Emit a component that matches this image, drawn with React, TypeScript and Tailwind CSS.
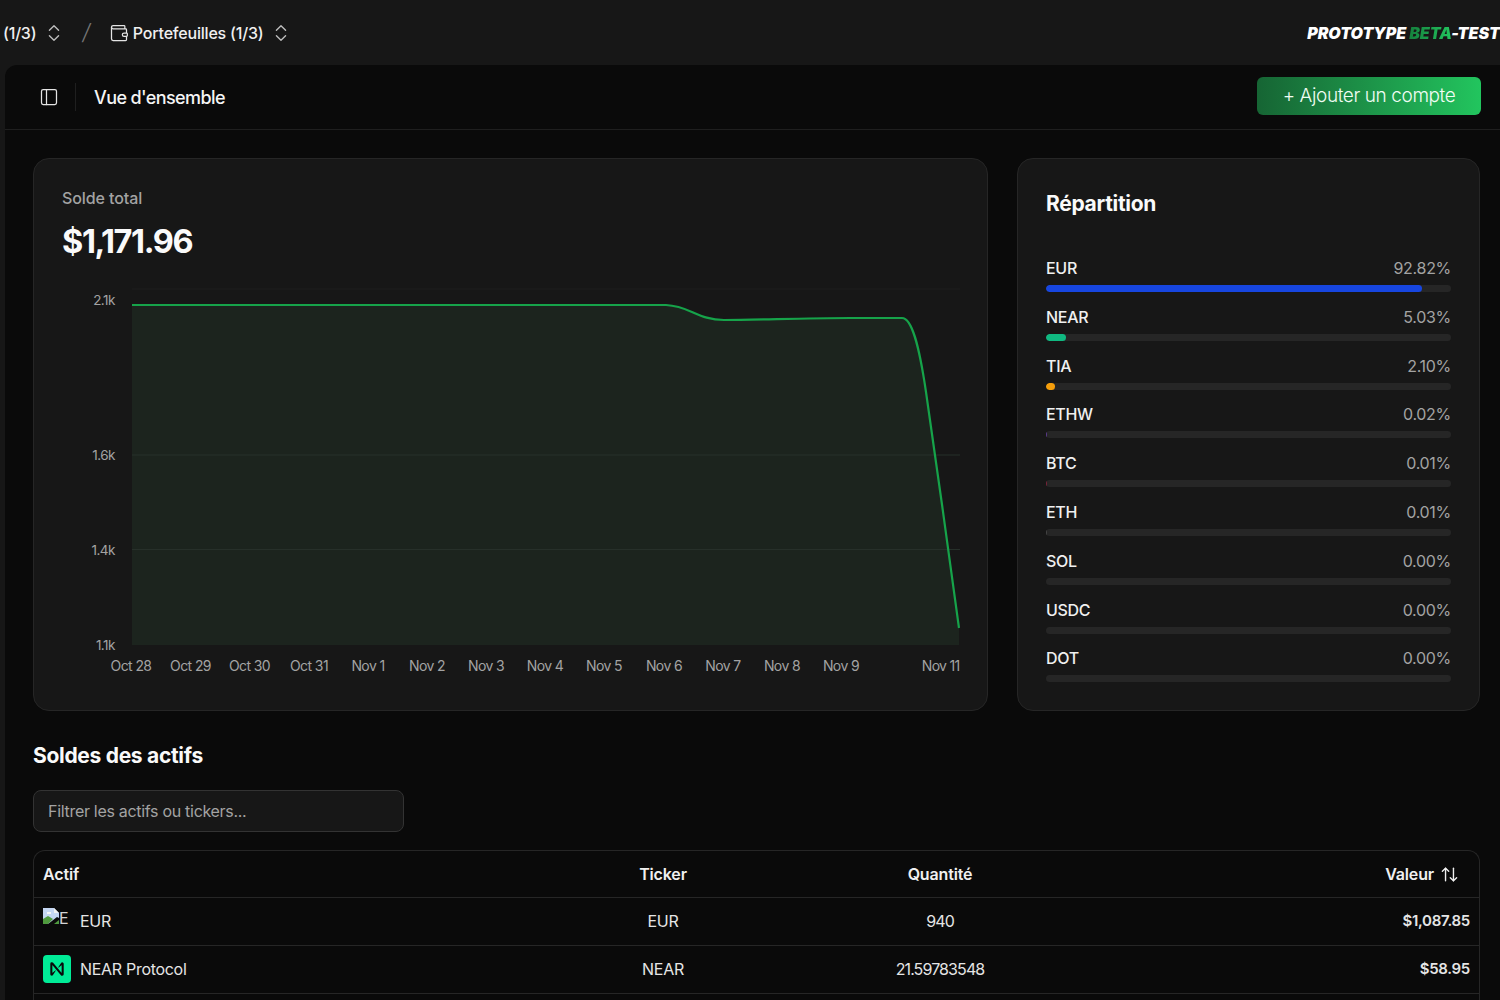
import { ArrowUpDown, ChevronsUpDown, PanelLeft, Wallet } from "lucide-react";

const alloc = [
  { name: "EUR", pct: "92.82%", w: "w-[92.82%]", c: "bg-[#1746e0]" },
  { name: "NEAR", pct: "5.03%", w: "w-[5.03%]", c: "bg-[#10b981]" },
  { name: "TIA", pct: "2.10%", w: "w-[2.1%]", c: "bg-[#f59e0b]" },
  { name: "ETHW", pct: "0.02%", w: "w-[1px]", c: "bg-[#5b3a8c]" },
  { name: "BTC", pct: "0.01%", w: "w-[1px]", c: "bg-[#7a2338]" },
  { name: "ETH", pct: "0.01%", w: "w-[1px]", c: "bg-[#444444]" },
  { name: "SOL", pct: "0.00%", w: "w-0", c: "bg-[#444444]" },
  { name: "USDC", pct: "0.00%", w: "w-0", c: "bg-[#444444]" },
  { name: "DOT", pct: "0.00%", w: "w-0", c: "bg-[#444444]" },
];

const xLabels = [
  ["Oct 28", 131],
  ["Oct 29", 190.5],
  ["Oct 30", 249.5],
  ["Oct 31", 309],
  ["Nov 1", 368],
  ["Nov 2", 427],
  ["Nov 3", 486],
  ["Nov 4", 545],
  ["Nov 5", 604],
  ["Nov 6", 664],
  ["Nov 7", 723],
  ["Nov 8", 782],
  ["Nov 9", 841],
];

const yLabels = [
  ["2.1k", 305],
  ["1.6k", 460],
  ["1.4k", 555],
  ["1.1k", 650],
];

const line =
  "M132 305 L666 305 C690 306 698 320 724 320 C760 320 800 318 850 318 L902 318 C912 318 919 345 926 392 C936 462 950 560 959 628";

function Chart() {
  return (
    <svg viewBox="62 285 898 395" className="w-[898px] h-[395px] mt-[23px] block">
      <line x1="132" x2="960" y1="289" y2="289" stroke="#1f1f1f" />
      <path d={line + " L959 645 L132 645 Z"} fill="#1c241e" />
      <line x1="132" x2="960" y1="455" y2="455" stroke="#27302a" />
      <line x1="132" x2="960" y1="549.5" y2="549.5" stroke="#27302a" />
      <path d={line} fill="none" stroke="#16a34a" strokeWidth="2.2" />
      {yLabels.map(([t, y]) => (
        <text key={t} x="115" y={y} textAnchor="end" fontSize="13.5" letterSpacing="-0.5" fill="#a3a3a3">
          {t}
        </text>
      ))}
      {xLabels.map(([t, x]) => (
        <text key={t} x={x} y="671" textAnchor="middle" fontSize="14" letterSpacing="-0.6" fill="#a3a3a3">
          {t}
        </text>
      ))}
      <text x="959.5" y="671" textAnchor="end" fontSize="14" letterSpacing="-0.7" fill="#a3a3a3">
        Nov 11
      </text>
    </svg>
  );
}

function BrokenImg() {
  return (
    <div className="w-7 h-7 flex items-start mt-[3px] text-[16px] leading-[20px] text-[#d4d4d4] overflow-hidden">
      <svg width="16" height="16" viewBox="0 0 16 16" className="shrink-0">
        <path d="M0 0 H11 L16 5 V16 H0 Z" fill="#c4d6f2" />
        <path d="M11 0 L16 5 H11 Z" fill="#f1f1f1" />
        <path d="M0 16 V11 L5 8 L10 11 L5 16 Z" fill="#4f9a3e" />
        <path d="M4 4 h4 v2 h-4 Z" fill="#f5f5f5" />
        <path d="M5 16 L14 9 L16 10 V16 Z" fill="#0a0a0a" />
        <path d="M11 16 L16 12 V16 Z" fill="#4f9a3e" />
      </svg>
      <span>E</span>
    </div>
  );
}

function NearLogo() {
  return (
    <div className="w-7 h-7 rounded bg-[#00ec97] flex items-center justify-center">
      <svg width="16" height="16" viewBox="0 0 24 24" fill="#0a0a0a">
        <path d="M18.1 3.1 13.9 9.3a.45.45 0 0 0 .67.59l4.13-3.58a.17.17 0 0 1 .28.13v11.17a.17.17 0 0 1-.3.11L6.18 2.8A2.15 2.15 0 0 0 4.54 2.04h-.44A2.15 2.15 0 0 0 1.95 4.2v15.6a2.15 2.15 0 0 0 3.98 1.12l4.19-6.2a.45.45 0 0 0-.67-.59l-4.13 3.58a.17.17 0 0 1-.28-.13V6.4a.17.17 0 0 1 .3-.11l12.5 14.9a2.15 2.15 0 0 0 1.64.76h.44a2.15 2.15 0 0 0 2.15-2.15V4.2a2.15 2.15 0 0 0-3.98-1.1z" />
      </svg>
    </div>
  );
}

function Row({ icon, name, ticker, qty, value }: { icon: React.ReactNode; name: string; ticker: string; qty: string; value: string }) {
  return (
    <div className="grid grid-cols-[550px_140px_414px_1fr] items-center h-12 pb-[2px] border-t border-[#262626] px-[9px] text-[16px] leading-[22px] tracking-[-0.3px] text-[#e5e5e5]">
      <div className="flex items-center gap-[9px]">
        {icon}
        <span>{name}</span>
      </div>
      <div className="text-center">{ticker}</div>
      <div className="text-center tracking-[-0.9px]">{qty}</div>
      <div className="text-right font-semibold text-[15px]">{value}</div>
    </div>
  );
}

export default function App() {
  return (
    <div className="h-screen overflow-hidden bg-[#171717] text-white font-['Inter',sans-serif]">
      <header className="h-[65px] flex items-center justify-between pl-[3px]">
        <div className="flex items-center text-[16px] font-medium tracking-[-0.2px] text-[#f0f0f0]">
          <span>(1/3)</span>
          <ChevronsUpDown size={22} strokeWidth={1.5} className="ml-[7px] text-[#bdbdbd]" />
          <span className="ml-[17px] text-[22px] font-light italic text-[#777777]">/</span>
          <Wallet size={20} strokeWidth={1.5} className="ml-[19px] text-[#e5e5e5]" />
          <span className="ml-[4px]">Portefeuilles (1/3)</span>
          <ChevronsUpDown size={22} strokeWidth={1.5} className="ml-[7px] text-[#bdbdbd]" />
        </div>
        <div className="text-[16px] font-black italic tracking-[-0.05px] whitespace-nowrap">
          PROTOTYPE{" "}
          <span className="bg-gradient-to-r from-[#15803d] to-[#22c55e] bg-clip-text text-transparent">BETA</span>
          -TEST
        </div>
      </header>

      <main className="ml-[5px] bg-[#0a0a0a] rounded-tl-xl h-[935px]">
        <div className="h-[65px] border-b border-[#1f1f1f] flex items-center justify-between pl-[33.5px] pr-[19px]">
          <div className="flex items-center">
            <PanelLeft size={20} strokeWidth={1.5} className="text-[#e5e5e5]" />
            <div className="w-px h-7 bg-[#1f1f1f] ml-[16.5px]" />
            <h1 className="ml-[18px] mt-[1px] text-[18px] font-medium tracking-[-0.6px] text-[#f5f5f5]">Vue d'ensemble</h1>
          </div>
          <button className="w-[224px] h-[38px] mb-[2px] rounded-md bg-gradient-to-r from-[#166534] to-[#22c55e] text-[19px] font-light tracking-[-0.4px] text-[#f0fdf4]">
            + Ajouter un compte
          </button>
        </div>

        <div className="pl-[28px] pr-[19px] pt-[28px]">
          <div className="grid grid-cols-[955px_463px] gap-[29px]">
            <section className="h-[553px] rounded-2xl border border-[#262626] bg-[#171717] pl-[28px] pt-[29px]">
              <div className="text-[16px] leading-5 font-medium tracking-[-0.1px] text-[#a3a3a3]">Solde total</div>
              <div className="mt-[14px] text-[32.5px] leading-10 font-bold tracking-[-1.4px] text-[#fafafa]">$1,171.96</div>
              <Chart />
            </section>

            <section className="h-[553px] rounded-2xl border border-[#262626] bg-[#171717] pl-[28px] pr-[28px] pt-[31px]">
              <h2 className="text-[21px] leading-7 font-bold tracking-[-0.3px] text-[#fafafa]">Répartition</h2>
              <div className="mt-[40px] flex flex-col gap-[14.8px]">
                {alloc.map((a) => (
                  <div key={a.name}>
                    <div className="flex justify-between items-center h-5 text-[16px] tracking-[-0.3px]">
                      <span className="font-medium text-[#f0f0f0]">{a.name}</span>
                      <span className="text-[#a3a3a3]">{a.pct}</span>
                    </div>
                    <div className="mt-[7px] h-[7px] rounded-full bg-[#262626] overflow-hidden">
                      <div className={`h-full rounded-full ${a.w} ${a.c}`} />
                    </div>
                  </div>
                ))}
              </div>
            </section>
          </div>

          <h2 className="mt-[31px] text-[21px] leading-7 font-bold tracking-[-0.3px] text-[#fafafa]">Soldes des actifs</h2>
          <input
            placeholder="Filtrer les actifs ou tickers..."
            className="mt-[20px] block w-[371px] h-[42px] rounded-lg border border-[#333333] bg-[#171717] px-[14px] text-[16px] tracking-[-0.3px] placeholder:text-[#a3a3a3] outline-none"
          />

          <div className="mt-[18px] w-[1447px] rounded-t-xl border border-b-0 border-[#262626]">
            <div className="grid grid-cols-[550px_140px_414px_1fr] items-center h-[46px] px-[9px] text-[16px] font-semibold tracking-[-0.15px] text-[#f0f0f0]">
              <div>Actif</div>
              <div className="text-center">Ticker</div>
              <div className="text-center">Quantité</div>
              <div className="flex items-center justify-end pr-[11px] gap-[6px]">
                Valeur
                <ArrowUpDown size={19} strokeWidth={1.75} />
              </div>
            </div>
            <Row icon={<BrokenImg />} name="EUR" ticker="EUR" qty="940" value="$1,087.85" />
            <Row icon={<NearLogo />} name="NEAR Protocol" ticker="NEAR" qty="21.59783548" value="$58.95" />
            <Row icon={<div className="w-7 h-7" />} name="" ticker="" qty="" value="" />
          </div>
        </div>
      </main>
    </div>
  );
}
